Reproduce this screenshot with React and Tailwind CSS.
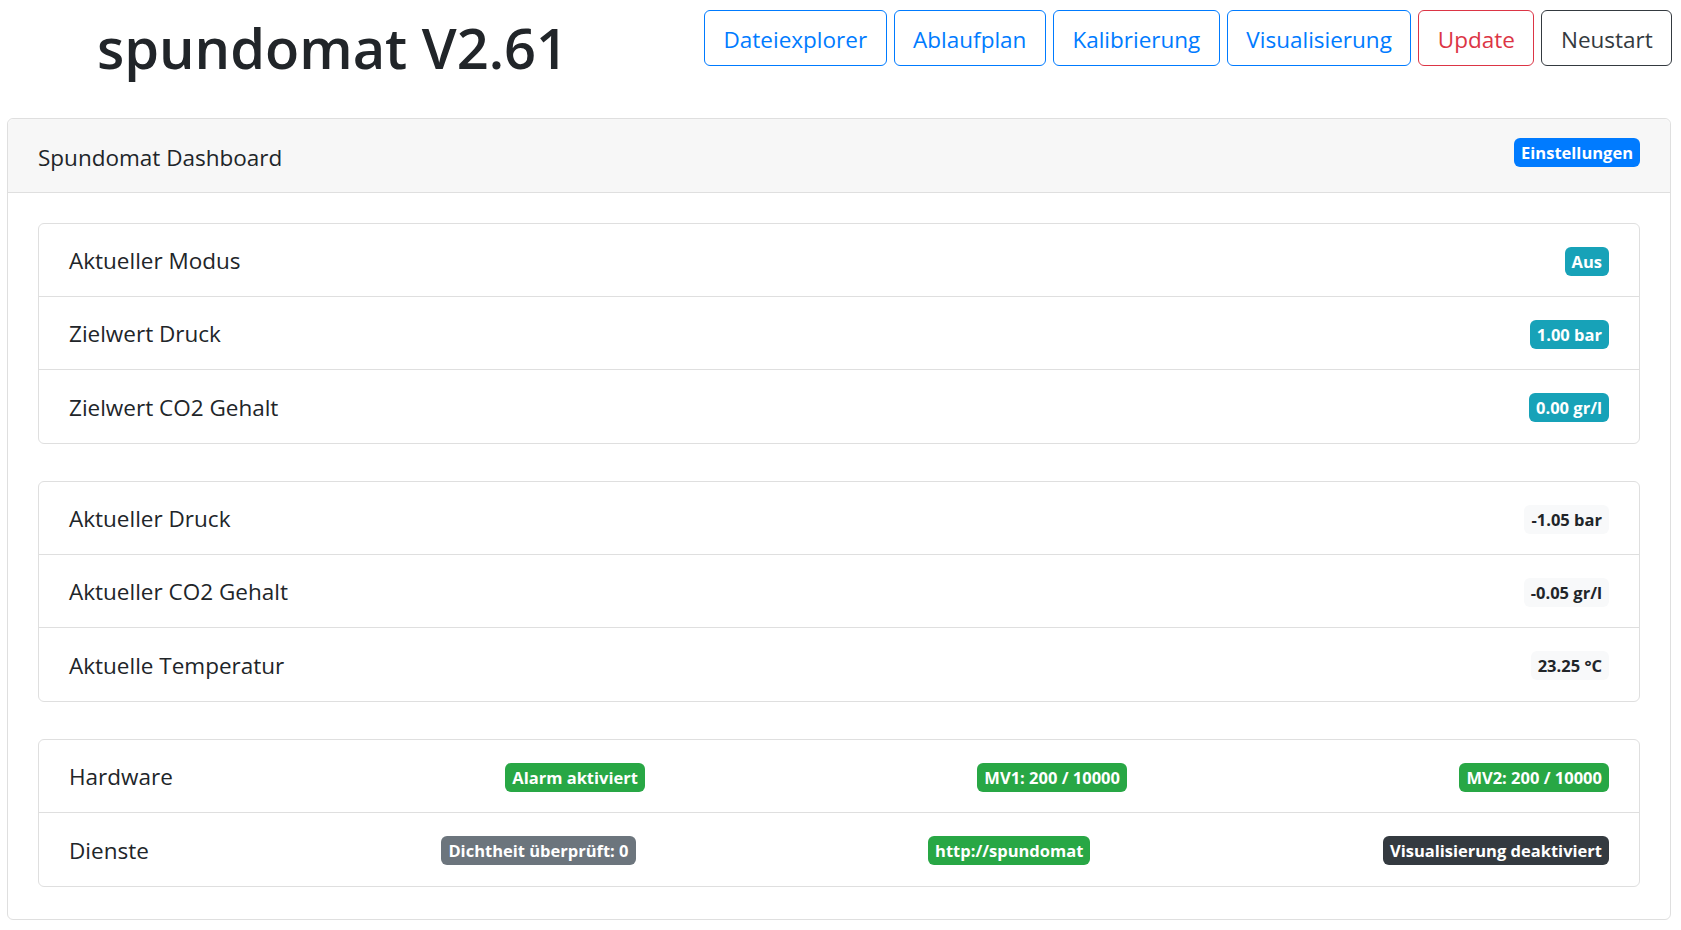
import React from 'react'

const buttons = [
  { label: 'Dateiexplorer', cls: 'border-[#007bff] text-[#007bff]' },
  { label: 'Ablaufplan', cls: 'border-[#007bff] text-[#007bff]' },
  { label: 'Kalibrierung', cls: 'border-[#007bff] text-[#007bff]' },
  { label: 'Visualisierung', cls: 'border-[#007bff] text-[#007bff]' },
  { label: 'Update', cls: 'border-[#dc3545] text-[#dc3545]' },
  { label: 'Neustart', cls: 'border-[#343a40] text-[#343a40]' },
]

function Badge({ children, color }) {
  return (
    <span className={`inline-block rounded-[6px] px-[7px] py-[5px] text-[16.5px] font-bold leading-[19px] ${color}`}>
      {children}
    </span>
  )
}

function Row({ children }) {
  return (
    <div className="flex h-[73px] items-center justify-between px-[30px] pt-[2px]">
      {children}
    </div>
  )
}

function ListGroup({ children, className = '' }) {
  return (
    <div className={`rounded-[6px] border border-[#dfdfdf] divide-y divide-[#dfdfdf] ${className}`}>
      {children}
    </div>
  )
}

const info = 'bg-[#17a2b8] text-white'
const light = 'bg-[#f8f9fa] text-[#212529]'
const green = 'bg-[#28a745] text-white'

export default function App() {
  return (
    <div className="min-h-screen bg-white text-[#212529]" style={{ fontFamily: '"Open Sans", "Noto Sans", sans-serif' }}>
      {/* Top bar */}
      <div className="flex h-[118px] items-start">
        <h1 className="w-[665px] pt-[11px] text-center text-[56px] font-semibold leading-[72px]">spundomat V2.61</h1>
        <div className="ml-[39px] flex gap-[7px] pt-[10px]">
          {buttons.map((b) => (
            <button
              key={b.label}
              className={`h-[56px] rounded-[6px] border bg-white px-[18.5px] pt-[3px] text-[22.5px] leading-[36px] ${b.cls}`}
            >
              {b.label}
            </button>
          ))}
        </div>
      </div>

      {/* Dashboard card */}
      <div className="ml-[7px] mr-[10px] rounded-[6px] border border-[#dfdfdf]">
        <div className="flex h-[74px] items-start justify-between rounded-t-[6px] border-b border-[#dfdfdf] bg-[#f7f7f7] px-[30px] pt-[19px]">
          <span className="pt-[2px] text-[22.5px] leading-[36px]">Spundomat Dashboard</span>
          <Badge color="bg-[#007bff] text-white">Einstellungen</Badge>
        </div>

        <div className="p-[30px] pb-[32px] text-[22.5px] leading-[36px]">
          <ListGroup>
            <Row><span>Aktueller Modus</span><Badge color={info}>Aus</Badge></Row>
            <Row><span>Zielwert Druck</span><Badge color={info}>1.00 bar</Badge></Row>
            <Row><span>Zielwert CO2 Gehalt</span><Badge color={info}>0.00 gr/l</Badge></Row>
          </ListGroup>

          <ListGroup className="mt-[37px]">
            <Row><span>Aktueller Druck</span><Badge color={light}>-1.05 bar</Badge></Row>
            <Row><span>Aktueller CO2 Gehalt</span><Badge color={light}>-0.05 gr/l</Badge></Row>
            <Row><span>Aktuelle Temperatur</span><Badge color={light}>23.25 °C</Badge></Row>
          </ListGroup>

          <ListGroup className="mt-[37px]">
            <Row>
              <span>Hardware</span>
              <Badge color={green}>Alarm aktiviert</Badge>
              <Badge color={green}>MV1: 200 / 10000</Badge>
              <Badge color={green}>MV2: 200 / 10000</Badge>
            </Row>
            <Row>
              <span>Dienste</span>
              <Badge color="bg-[#6c757d] text-white">Dichtheit überprüft: 0</Badge>
              <Badge color={green}>http://spundomat</Badge>
              <Badge color="bg-[#343a40] text-white">Visualisierung deaktiviert</Badge>
            </Row>
          </ListGroup>
        </div>
      </div>
    </div>
  )
}
